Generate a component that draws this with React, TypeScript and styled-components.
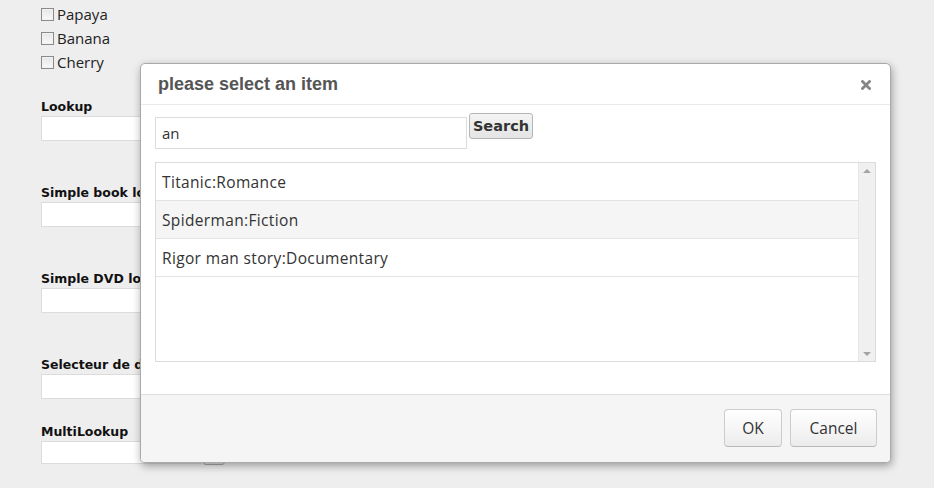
import React from 'react'
import styled, { createGlobalStyle } from 'styled-components'

const GlobalStyle = createGlobalStyle`
  html, body {
    margin: 0;
    padding: 0;
    background: #eeeeee;
  }
  body {
    font-family: "Open Sans", "Noto Sans", sans-serif;
    color: #222;
  }
  * {
    box-sizing: border-box;
  }
`

const Page = styled.div`
  position: relative;
  width: 934px;
  height: 488px;
  overflow: hidden;
  padding: 2px 0 0 41px;
`

const CheckRow = styled.label`
  display: flex;
  align-items: center;
  height: 24px;
  font-size: 15px;
  color: #222;
`

const Check = styled.span`
  display: inline-block;
  width: 13px;
  height: 13px;
  margin-right: 3px;
  border: 1px solid #8a8a8a;
  background: linear-gradient(#e6e6e6, #fafafa);
  box-shadow: inset 0 0 0 1px #f2f2f2;
`

const Fields = styled.div`
  margin-top: 25px;
`

const Field = styled.div<{ $gap: number }>`
  margin-bottom: ${p => p.$gap}px;
`

const FieldLabel = styled.div`
  font-family: "DejaVu Sans", Verdana, sans-serif;
  font-weight: bold;
  font-size: 12.5px;
  line-height: 16px;
  height: 16px;
  margin-bottom: 1px;
  color: #111;
  white-space: nowrap;
`

const FieldRow = styled.div`
  display: flex;
  align-items: flex-end;
`

const TextBox = styled.div<{ $h: number }>`
  width: 160px;
  height: ${p => p.$h}px;
  background: #fff;
  border: 1px solid #dcdcdc;
`

const SmallButton = styled.div`
  width: 22px;
  height: 22px;
  margin-left: 2px;
  margin-bottom: -1px;
  border: 1px solid #aaa;
  border-radius: 3px;
  background: #e5e5e5;
`

const Dialog = styled.div`
  position: absolute;
  left: 140px;
  top: 63px;
  width: 751px;
  height: 400px;
  background: #fff;
  border: 1px solid #a9a9a9;
  border-radius: 5px;
  box-shadow: 1px 3px 8px rgba(0, 0, 0, 0.35);
  display: flex;
  flex-direction: column;
  overflow: hidden;
`

const Header = styled.div`
  height: 41px;
  display: flex;
  align-items: center;
  justify-content: space-between;
  padding: 0 19px 0 17px;
  border-bottom: 1px solid #eaeaea;
`

const Title = styled.h3`
  margin: 0;
  font-family: "Liberation Sans", Arial, sans-serif;
  font-weight: bold;
  font-size: 18px;
  color: #555;
`

const Close = styled.span`
  display: flex;
  width: 10px;
  height: 10px;
  margin-top: 2px;
`

const Body = styled.div`
  height: 289px;
  padding: 8px 14px 0 14px;
`

const SearchRow = styled.div`
  display: flex;
  align-items: flex-start;
`

const SearchInput = styled.div`
  width: 312px;
  height: 32px;
  margin-top: 4px;
  border: 1px solid #dcdcdc;
  padding: 0 6px;
  display: flex;
  align-items: center;
  font-size: 15px;
  color: #333;
`

const SearchButton = styled.button`
  margin-left: 2px;
  width: 64px;
  height: 26px;
  padding: 0;
  font-family: "DejaVu Sans", Verdana, sans-serif;
  font-weight: bold;
  font-size: 14.5px;
  color: #333;
  background: linear-gradient(#f4f4f4, #e4e4e4);
  border: 1px solid #b5b5b5;
  border-radius: 3px;
`

const ListBox = styled.div`
  margin-top: 13px;
  height: 200px;
  border: 1px solid #dcdcdc;
  display: flex;
`

const Rows = styled.div`
  flex: 1;
`

const Row = styled.div<{ $hover?: boolean }>`
  height: 38px;
  display: flex;
  align-items: center;
  padding-left: 6px;
  font-size: 15.5px;
  letter-spacing: 0.35px;
  color: #333;
  background: ${p => (p.$hover ? '#f5f5f5' : '#fff')};
  border-bottom: 1px solid #e3e3e3;
`

const ScrollBar = styled.div`
  width: 17px;
  background: #f0f0f0;
  border-left: 1px solid #e6e6e6;
  display: flex;
  flex-direction: column;
  justify-content: space-between;
  align-items: center;
  padding: 6px 0 5px;
`

const Arrow = styled.span<{ $down?: boolean }>`
  width: 0;
  height: 0;
  border-left: 4px solid transparent;
  border-right: 4px solid transparent;
  ${p =>
    p.$down
      ? 'border-top: 4px solid #a3a3a3;'
      : 'border-bottom: 4px solid #a3a3a3;'}
`

const Footer = styled.div`
  flex: 1;
  background: #f5f5f5;
  border-top: 1px solid #dddddd;
  display: flex;
  justify-content: flex-end;
  align-items: flex-start;
  gap: 8px;
  padding: 14px 13px 0 0;
`

const FooterButton = styled.button<{ $w: number }>`
  width: ${p => p.$w}px;
  height: 38px;
  padding: 0;
  font-family: "Open Sans", "Noto Sans", sans-serif;
  font-size: 15.5px;
  color: #333;
  background: linear-gradient(#ffffff, #ececec);
  border: 1px solid #cccccc;
  border-bottom-color: #b8b8b8;
  border-radius: 4px;
  box-shadow: inset 0 1px 0 #fff;
`

const fruits = ['Papaya', 'Banana', 'Cherry']

const fields = [
  { label: 'Lookup', gap: 44, h: 25 },
  { label: 'Simple book lookup', gap: 44, h: 25 },
  { label: 'Simple DVD lookup', gap: 44, h: 25 },
  { label: 'Selecteur de date', gap: 25, h: 25 },
  { label: 'MultiLookup', gap: 0, h: 23, button: true },
]

const items = [
  { text: 'Titanic:Romance' },
  { text: 'Spiderman:Fiction', hover: true },
  { text: 'Rigor man story:Documentary' },
]

const CloseIcon = () => (
  <svg width="10" height="10" viewBox="0 0 10 10">
    <path d="M1.5 1.5 L8.5 8.5 M8.5 1.5 L1.5 8.5" stroke="#858585" strokeWidth="2.8" strokeLinecap="square" />
  </svg>
)

export default function App() {
  return (
    <Page>
      <GlobalStyle />
      {fruits.map(f => (
        <CheckRow key={f}>
          <Check />
          {f}
        </CheckRow>
      ))}

      <Fields>
        {fields.map(f => (
          <Field key={f.label} $gap={f.gap}>
            <FieldLabel>{f.label}</FieldLabel>
            <FieldRow>
              <TextBox $h={f.h} />
              {f.button ? <SmallButton /> : null}
            </FieldRow>
          </Field>
        ))}
      </Fields>

      <Dialog>
        <Header>
          <Title>please select an item</Title>
          <Close>
            <CloseIcon />
          </Close>
        </Header>
        <Body>
          <SearchRow>
            <SearchInput>an</SearchInput>
            <SearchButton>Search</SearchButton>
          </SearchRow>
          <ListBox>
            <Rows>
              {items.map(it => (
                <Row key={it.text} $hover={it.hover}>
                  {it.text}
                </Row>
              ))}
            </Rows>
            <ScrollBar>
              <Arrow />
              <Arrow $down />
            </ScrollBar>
          </ListBox>
        </Body>
        <Footer>
          <FooterButton $w={58}>OK</FooterButton>
          <FooterButton $w={87}>Cancel</FooterButton>
        </Footer>
      </Dialog>
    </Page>
  )
}
